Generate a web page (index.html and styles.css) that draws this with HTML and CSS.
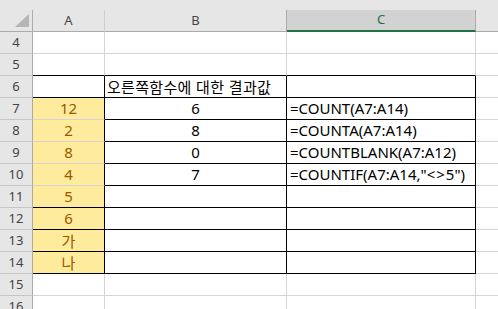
FILE: index.html
```html
<!DOCTYPE html>
<html lang="ko">

<head>
    <meta charset="UTF-8">
    <meta name="viewport" content="width=device-width, initial-scale=1.0">
    <title>COUNT 함수</title>
    <link rel="stylesheet" href="styles.css">
</head>

<body>
    <div class="top-strip"></div>
    <div class="sheet">
        <!-- column headers -->
        <div class="corner"><span class="corner-mark"></span></div>
        <div class="col-head">A</div>
        <div class="col-head before-active">B</div>
        <div class="col-head active">C</div>
        <div class="col-head last"></div>

        <!-- row 4 -->
        <div class="row-head">4</div>
        <div class="cell"></div>
        <div class="cell"></div>
        <div class="cell"></div>
        <div class="cell last"></div>

        <!-- row 5 -->
        <div class="row-head">5</div>
        <div class="cell edge-b"></div>
        <div class="cell edge-b"></div>
        <div class="cell edge-b"></div>
        <div class="cell last"></div>

        <!-- row 6 -->
        <div class="row-head">6</div>
        <div class="cell edge-r edge-b"></div>
        <div class="cell edge-r edge-b kor title">오른쪽함수에 대한 결과값</div>
        <div class="cell edge-r edge-b"></div>
        <div class="cell last"></div>

        <!-- row 7 -->
        <div class="row-head">7</div>
        <div class="cell neutral edge-r">12</div>
        <div class="cell edge-r edge-b center">6</div>
        <div class="cell edge-r edge-b formula">=COUNT(A7:A14)</div>
        <div class="cell last"></div>

        <!-- row 8 -->
        <div class="row-head">8</div>
        <div class="cell neutral edge-r">2</div>
        <div class="cell edge-r edge-b center">8</div>
        <div class="cell edge-r edge-b formula">=COUNTA(A7:A14)</div>
        <div class="cell last"></div>

        <!-- row 9 -->
        <div class="row-head">9</div>
        <div class="cell neutral edge-r">8</div>
        <div class="cell edge-r edge-b center">0</div>
        <div class="cell edge-r edge-b formula">=COUNTBLANK(A7:A12)</div>
        <div class="cell last"></div>

        <!-- row 10 -->
        <div class="row-head">10</div>
        <div class="cell neutral edge-r">4</div>
        <div class="cell edge-r edge-b center">7</div>
        <div class="cell edge-r edge-b formula">=COUNTIF(A7:A14,"<span class="op">&lt;&gt;</span>5")</div>
        <div class="cell last"></div>

        <!-- row 11 -->
        <div class="row-head">11</div>
        <div class="cell neutral edge-r edge-b">5</div>
        <div class="cell edge-r edge-b"></div>
        <div class="cell edge-r edge-b"></div>
        <div class="cell last"></div>

        <!-- row 12 -->
        <div class="row-head">12</div>
        <div class="cell neutral edge-r edge-b">6</div>
        <div class="cell edge-r edge-b"></div>
        <div class="cell edge-r edge-b"></div>
        <div class="cell last"></div>

        <!-- row 13 -->
        <div class="row-head">13</div>
        <div class="cell neutral edge-r edge-b kor">가</div>
        <div class="cell edge-r edge-b"></div>
        <div class="cell edge-r edge-b"></div>
        <div class="cell last"></div>

        <!-- row 14 -->
        <div class="row-head">14</div>
        <div class="cell neutral edge-r edge-b kor">나</div>
        <div class="cell edge-r edge-b"></div>
        <div class="cell edge-r edge-b"></div>
        <div class="cell last"></div>

        <!-- row 15 -->
        <div class="row-head">15</div>
        <div class="cell"></div>
        <div class="cell"></div>
        <div class="cell"></div>
        <div class="cell last"></div>

        <!-- row 16 -->
        <div class="row-head">16</div>
        <div class="cell"></div>
        <div class="cell"></div>
        <div class="cell"></div>
        <div class="cell last"></div>
    </div>
</body>

</html>
```

FILE: styles.css
```css
body {
    margin: 0;
    background: #ffffff;
    overflow: hidden;
    font-family: "Noto Sans", "Noto Sans CJK KR", sans-serif;
}

.top-strip {
    height: 10px;
    background: #e6e6e6;
}

.sheet {
    display: grid;
    grid-template-columns: 33px 72px 182px 189px 1fr;
    grid-auto-rows: 22px;
}

.sheet > div {
    box-sizing: border-box;
    border-right: 1px solid #d4d4d4;
    border-bottom: 1px solid #d4d4d4;
    white-space: nowrap;
    overflow: hidden;
}

/* header band */
.corner {
    position: relative;
    background: #e6e6e6;
    border-right-color: #ababab !important;
    border-bottom-color: #ababab !important;
}

.corner-mark {
    position: absolute;
    left: 15px;
    top: 4px;
    width: 0;
    height: 0;
    border-left: 14px solid transparent;
    border-bottom: 13px solid #b5b5b5;
}

.col-head {
    background: #e6e6e6;
    border-right-color: #cfcfcf !important;
    border-bottom-color: #ababab !important;
    font-size: 13px;
    line-height: 20px;
    color: #444444;
    text-align: center;
}

.col-head.before-active {
    border-right-color: #ababab !important;
}

.col-head.active {
    background: #d2d2d2;
    color: #217346;
    border-right-color: #ababab !important;
    border-bottom: 2px solid #217346 !important;
    line-height: 19px;
}

.col-head.last {
    border-right: none;
}

.row-head {
    background: #e6e6e6;
    border-right-color: #ababab !important;
    border-bottom-color: #c6c6c6 !important;
    font-size: 13px;
    line-height: 21px;
    color: #444444;
    text-align: center;
}

/* cells */
.cell {
    font-size: 15px;
    line-height: 21px;
    color: #000000;
    padding: 0 2px;
}

.cell.last {
    border-right: none;
}

.cell.edge-r {
    border-right-color: #000000;
}

.cell.edge-b {
    border-bottom-color: #000000;
}

.center {
    text-align: center;
}

.formula {
    padding-left: 3px;
}

.op {
    letter-spacing: 1px;
}

.kor {
    font-family: "Noto Sans CJK KR", sans-serif;
}

.title {
    letter-spacing: 0.3px;
}

/* neutral style on A7:A14 */
.neutral {
    background: #ffeb9c;
    color: #9c5700;
    text-align: center;
    border-bottom-color: #ffeb9c;
}
```
